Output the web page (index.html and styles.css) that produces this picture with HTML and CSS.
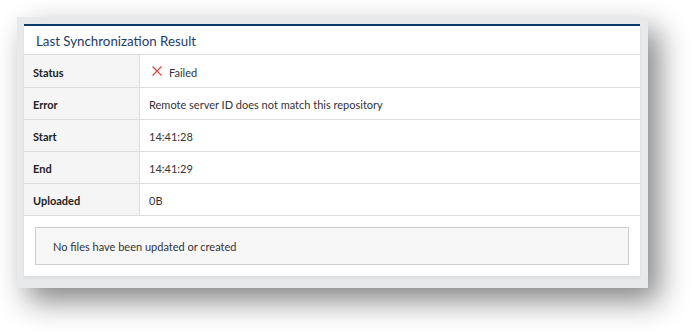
FILE: index.html
```html
<!DOCTYPE html>
<html>
<head>
<meta charset="utf-8">
<link rel="stylesheet" href="styles.css">
</head>
<body>
<div class="frame">
  <div class="panel">
    <div class="panel-title">Last Synchronization Result</div>
    <div class="table">
      <div class="row row-first">
        <div class="label">Status</div>
        <div class="value"><svg class="x-icon" width="10" height="10" viewBox="0 0 10 10"><path d="M0.5 0.5 L9.5 9.5 M9.5 0.5 L0.5 9.5" stroke="#d9413a" stroke-width="1.1" fill="none"/></svg>Failed</div>
      </div>
      <div class="row">
        <div class="label">Error</div>
        <div class="value">Remote server ID does not match this repository</div>
      </div>
      <div class="row">
        <div class="label">Start</div>
        <div class="value">14:41:28</div>
      </div>
      <div class="row">
        <div class="label">End</div>
        <div class="value">14:41:29</div>
      </div>
      <div class="row">
        <div class="label">Uploaded</div>
        <div class="value">0B</div>
      </div>
    </div>
    <div class="footer">
      <div class="notice">No files have been updated or created</div>
    </div>
  </div>
</div>
</body>
</html>
```

FILE: styles.css
```css
html, body {
  margin: 0;
  padding: 0;
  background: #ffffff;
}
body {
  font-family: Lato, "Open Sans", sans-serif;
  font-size: 11px;
  color: #333333;
  width: 696px;
  height: 336px;
  overflow: hidden;
}
.frame {
  margin: 17px 0 0 17px;
  width: 631px;
  height: 271px;
  box-sizing: border-box;
  padding: 7px 8px 12px 7px;
  background: #e8e9eb;
  box-shadow: 11px 13px 28px rgba(0, 0, 0, 0.48);
}
.panel {
  background: #ffffff;
  border-top: 2px solid #0b3a6b;
  height: 252px;
  box-sizing: border-box;
  display: flex;
  flex-direction: column;
  box-shadow: 0 2px 3px rgba(0, 0, 0, 0.06);
}
.panel-title {
  height: 29px;
  flex: none;
  box-sizing: border-box;
  border-bottom: 1px solid #dddddd;
  padding-left: 12px;
  padding-top: 1px;
  display: flex;
  align-items: center;
  font-size: 13.3px;
  color: #1e3d63;
}
.row {
  display: flex;
  height: 32px;
  box-sizing: border-box;
  border-bottom: 1px solid #dddddd;
}
.row-first {
  height: 33px;
}
.label {
  width: 116px;
  flex: none;
  box-sizing: border-box;
  background: #f5f5f5;
  border-right: 1px solid #dddddd;
  padding-left: 9px;
  padding-top: 2px;
  display: flex;
  align-items: center;
  font-weight: bold;
  color: #222222;
}
.value {
  padding-left: 9px;
  padding-top: 2px;
  display: flex;
  align-items: center;
  color: #333333;
}
.x-icon {
  margin-right: 7px;
  margin-left: 3px;
  margin-top: -2px;
}
.footer {
  padding: 11px;
}
.notice {
  height: 38px;
  box-sizing: border-box;
  border: 1px solid #cccccc;
  background: #f7f7f7;
  padding-left: 17px;
  display: flex;
  align-items: center;
  color: #333333;
}
```
